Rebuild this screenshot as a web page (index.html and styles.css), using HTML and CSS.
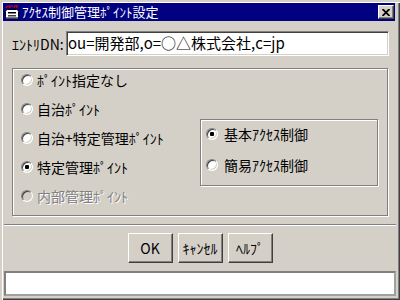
FILE: index.html
```html
<html>
    <head>
        <title>アクセス制御管理ポイント設定</title>
        <link rel="stylesheet" href="styles.css">
    </head>
    <body>

        <div class="window">
            <!-- title bar -->
            <div class="titlebar">
                <svg class="app-icon" width="16" height="16" viewBox="0 0 16 16">
                    <path d="M2 4 Q3 1 5 3 M6 1 V4 M7 2 H9 M10 4 Q11 0 13 3 M13 1 V4" fill="none" stroke="#e00000" stroke-width="1.2"/>
                    <rect x="1.5" y="5.5" width="13" height="9" rx="2" fill="#fff" stroke="#000"/>
                    <rect x="4" y="8" width="8" height="1.5" fill="#000"/>
                    <rect x="4" y="11" width="8" height="1.5" fill="#404040"/>
                    <rect x="2" y="13" width="12" height="1.5" fill="#808080"/>
                </svg>
                <span class="title">ｱｸｾｽ制御管理ﾎﾟｲﾝﾄ設定</span>
                <span class="close">
                    <svg width="8" height="7" viewBox="0 0 8 7">
                        <path d="M0.5 0 L7.5 7 M7.5 0 L0.5 7" stroke="#000" stroke-width="1.8"/>
                    </svg>
                </span>
            </div>

            <!-- entry -->
            <div class="entry">
                <span class="entry-label">ｴﾝﾄﾘDN:</span>
                <div class="entry-field">ou=開発部,o=○△株式会社,c=jp</div>
            </div>

            <!-- point type -->
            <div class="group">
                <div class="point-list">
                    <div class="option"><span class="radio"></span>ﾎﾟｲﾝﾄ指定なし</div>
                    <div class="option"><span class="radio"></span>自治ﾎﾟｲﾝﾄ</div>
                    <div class="option"><span class="radio"></span>自治+特定管理ﾎﾟｲﾝﾄ</div>
                    <div class="option"><span class="radio checked"></span>特定管理ﾎﾟｲﾝﾄ</div>
                    <div class="option disabled"><span class="radio"></span>内部管理ﾎﾟｲﾝﾄ</div>
                </div>
                <div class="side">
                    <div class="access-box">
                        <div class="option"><span class="radio checked"></span>基本ｱｸｾｽ制御</div>
                        <div class="option"><span class="radio"></span>簡易ｱｸｾｽ制御</div>
                    </div>
                </div>
            </div>

            <div class="separator"></div>

            <div class="buttons">
                <button class="button">OK</button>
                <button class="button">ｷｬﾝｾﾙ</button>
                <button class="button">ﾍﾙﾌﾟ</button>
            </div>

            <!-- status line -->
            <div class="status"></div>
        </div>

    </body>
</html>
```

FILE: styles.css
```css
/* Basic Reset */
* {
    margin: 0;
    padding: 0;
    box-sizing: border-box;
}

body {
    width: 400px;
    height: 300px;
    overflow: hidden;
    font-family: "Noto Sans CJK JP", "Liberation Sans", sans-serif;
    font-size: 14px;
    color: #000;
    background-color: #d4d0c8;
}

.window {
    width: 400px;
    height: 300px;
    padding: 3px;
    background-color: #d4d0c8;
    box-shadow: inset 2px 2px #d4d0c8, inset 3px 3px #fff, inset -1px -1px #404040, inset -2px -2px #808080;
}

.titlebar {
    display: flex;
    align-items: center;
    height: 18px;
    margin-right: 2px;
    padding-left: 1px;
    background-color: #000080;
    color: #fff;
}

.app-icon {
    flex: none;
}

.title {
    margin-left: 2px;
    font-size: 13px;
    line-height: 18px;
}

.close {
    display: flex;
    align-items: center;
    justify-content: center;
    width: 16px;
    height: 14px;
    margin-left: auto;
    margin-right: 1px;
    background-color: #d4d0c8;
    border: 1px solid;
    border-color: #fff #404040 #404040 #fff;
    box-shadow: inset -1px -1px #808080;
}

.entry {
    display: flex;
    align-items: center;
    height: 25px;
    margin-top: 10px;
    padding-left: 9px;
}

.entry-label {
    width: 54px;
}

.entry-field {
    width: 323px;
    height: 25px;
    padding-left: 1px;
    font-size: 15px;
    line-height: 21px;
    background-color: #fff;
    border: 1px solid;
    border-color: #808080 #fff #fff #808080;
    box-shadow: inset 1px 1px #404040, inset -1px -1px #d4d0c8;
    white-space: nowrap;
}

.group {
    display: flex;
    width: 376px;
    height: 148px;
    margin: 12px 0 0 9px;
    padding: 0 9px 8px 8px;
    border: 1px solid #808080;
    box-shadow: inset 1px 1px #fff, 1px 1px #fff;
}

.point-list {
    display: flex;
    flex-direction: column;
    gap: 7px;
}

.option {
    display: flex;
    align-items: center;
    gap: 4px;
    height: 22px;
    white-space: nowrap;
}

.option.disabled {
    color: #808080;
    text-shadow: 1px 1px #fff;
}

.radio {
    position: relative;
    flex: none;
    width: 12px;
    height: 12px;
    border-radius: 50%;
    background-color: #fff;
    border: 1px solid;
    border-color: #808080 #fff #fff #808080;
    box-shadow: inset 1px 1px #404040, inset -1px -1px #d4d0c8;
}

.radio.checked::after {
    content: "";
    position: absolute;
    left: 3px;
    top: 3px;
    width: 4px;
    height: 4px;
    border-radius: 1px;
    background-color: #000;
}

.disabled .radio {
    background-color: #d4d0c8;
}

.side {
    margin-left: auto;
    padding-top: 50px;
}

.access-box {
    display: flex;
    flex-direction: column;
    gap: 9px;
    width: 178px;
    padding: 3px 5px 9px;
    border: 1px solid #808080;
    box-shadow: inset 1px 1px #fff, 1px 1px #fff;
}

.access-box .option {
    gap: 6px;
}

.separator {
    height: 2px;
    margin: 8px 1px 0;
    border-top: 1px solid #808080;
    border-bottom: 1px solid #fff;
}

.buttons {
    display: flex;
    justify-content: center;
    gap: 5px;
    margin-top: 7px;
}

.button {
    width: 45px;
    height: 30px;
    font-family: inherit;
    font-size: 14px;
    color: #000;
    background-color: #d4d0c8;
    border: 1px solid;
    border-color: #fff #404040 #404040 #fff;
    box-shadow: inset -1px -1px #808080;
}

.status {
    height: 25px;
    margin: 8px 1px 0;
    background-color: #fff;
    border: 2px solid;
    border-color: #808080 #a0a0a0 #a0a0a0 #808080;
}
```
